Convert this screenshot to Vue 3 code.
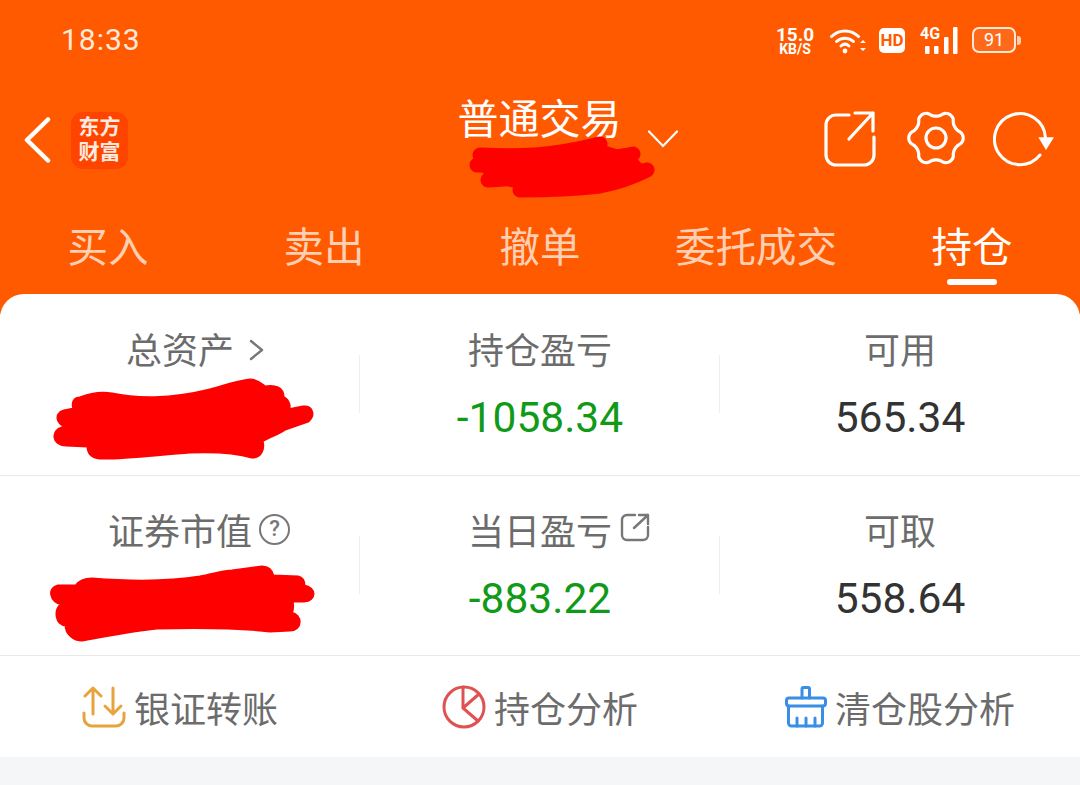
<template>
  <div class="page">
    <header class="head">
      <!-- 状态栏 -->
      <div class="status">
        <span class="time">18:33</span>
        <div class="status-right">
          <div class="speed"><b>15.0</b><b class="speed-unit">KB/S</b></div>
          <svg class="wifi" width="36" height="26" viewBox="0 0 36 26" fill="none" stroke="#fff" stroke-width="3" stroke-linecap="round">
            <path d="M1.5 8.5C9 1 21 1 28.5 8.5" />
            <path d="M6.5 13.5C11 9 19 9 23.5 13.5" />
            <path d="M11 18c2.500-2.300 5.500-2.300 8 0" />
            <circle cx="15" cy="23" r="2.400" fill="#fff" stroke="none" />
            <path d="M30 15l3-3 3 3zM30 20l3 3 3-3z" fill="#fff" stroke="none" />
          </svg>
          <span class="hd">HD</span>
          <div class="net">
            <span class="net-4g">4G</span>
            <svg width="38" height="27" viewBox="0 0 38 27" fill="#fff">
              <rect x="5" y="19" width="4.500" height="8" rx="1" />
              <rect x="14" y="19" width="4.500" height="8" rx="1" />
              <rect x="24" y="10" width="4.500" height="17" rx="1" />
              <rect x="33" y="0" width="4.500" height="27" rx="1" />
            </svg>
          </div>
          <div class="battery"><span class="battery-body">91</span><i class="battery-nub"></i></div>
        </div>
      </div>

      <!-- 导航 -->
      <nav class="nav">
        <svg width="27" height="46" viewBox="0 0 27 46" fill="none" stroke="#fff" stroke-width="4.500" stroke-linecap="round" stroke-linejoin="round">
          <path d="M24 2.500L3 23l21 20.500" />
        </svg>
        <div class="logo">东方<br />财富</div>
        <div class="title">普通交易</div>
        <svg class="chevron" width="30" height="18" viewBox="0 0 30 18" fill="none" stroke="#fff" stroke-width="2.200" stroke-linecap="round">
          <path d="M1 1.500L15 16 29 1.500" />
        </svg>
        <svg class="nav-share" width="52" height="56" viewBox="0 0 52 56" fill="none" stroke="#fff" stroke-width="3.200" stroke-linecap="round" stroke-linejoin="round">
          <path d="M25 4H12A10 10 0 0 0 2 14v30a10 10 0 0 0 10 10h28a10 10 0 0 0 10-10V26" />
          <path d="M25 28L49 2M31 2h18v18" />
        </svg>
        <svg class="nav-gear" width="58" height="56" viewBox="0 0 58 56" fill="none" stroke="#fff" stroke-width="3.200" stroke-linejoin="round">
          <path :d="gearPath" />
          <circle cx="29" cy="28" r="10" />
        </svg>
        <svg class="nav-refresh" width="62" height="56" viewBox="0 0 62 56" fill="none" stroke="#fff" stroke-width="3" stroke-linecap="round">
          <path d="M47 43A25.500 25.500 0 1 1 52.500 26" />
          <path d="M45.300 25.300H61L53 38z" fill="#fff" stroke="none" />
        </svg>
      </nav>
      <svg class="scribble-sub" width="200" height="70" viewBox="465 132 200 70">
        <path d="M480 155C500 156 520 156 535 155C560 153 580 149 600 144M477 165C510 166 530 165 560 163C590 160 610 159 633 154M488 180C515 178 535 178 560 175C590 173 620 175 647 170M520 190C550 190 575 189 600 186C620 182 635 176 647 170" fill="none" stroke="#f00" stroke-width="15" stroke-linecap="round" />
        <path d="M480 155L600 144 633 154 647 170 520 190 488 180 477 165z" fill="#f00" />
      </svg>

      <!-- 标签 -->
      <div class="tabs">
        <div v-for="tab in tabs" :key="tab" class="tab" :class="{ 'tab--active': tab === '持仓' }">{{ tab }}</div>
      </div>
    </header>

    <main class="card">
      <section class="row row--first">
        <div class="cell">
          <div class="label">总资产
            <svg class="label-icon label-arrow" width="15" height="22" viewBox="0 0 15 22" fill="none" stroke="#777" stroke-width="2.400" stroke-linecap="round" stroke-linejoin="round">
              <path d="M2 2l11 9-11 9" />
            </svg>
          </div>
          <div class="value">&nbsp;</div>
          <svg class="scribble" width="360" height="181" viewBox="0 294 360 181">
            <path fill="#f00" stroke="#f00" stroke-linejoin="round" stroke-width="3" d="M80 398C90 394 100 392 112 394C135 399 170 400 210 390C225 386 238 381 250 380C258 380 262 385 265 387C275 385 283 388 283 397C290 401 290 408 288 410L303 407C312 406 315 415 308 421L285 429C278 434 270 436 262 441C264 447 262 457 252 457C235 452 215 451 190 452C160 454 120 459 100 458C90 457 88 452 88 446L66 445C52 445 52 430 62 428L74 427C56 428 54 413 64 411L74 409C72 403 74 398 80 398z" />
          </svg>
        </div>
        <div class="cell">
          <div class="label">持仓盈亏</div>
          <div class="value value--down">-1058.34</div>
        </div>
        <div class="cell">
          <div class="label">可用</div>
          <div class="value">565.34</div>
        </div>
      </section>

      <section class="row">
        <div class="cell">
          <div class="label">证券市值
            <span class="label-icon help">?</span>
          </div>
          <div class="value">&nbsp;</div>
          <svg class="scribble scribble--low" width="360" height="179" viewBox="0 476 360 179">
            <path fill="#f00" stroke="#f00" stroke-linejoin="round" stroke-width="3" d="M58 586L76 586C80 580 86 579 92 579C130 582 170 582 200 577C215 574 225 571 232 571L262 567C270 567 272 572 273 576L298 577C303 578 304 583 304 586C316 588 316 600 304 601L292 601C293 606 293 610 291 613C302 615 302 630 290 630L270 631C245 628 200 627 157 628C135 630 105 636 82 640C74 640 66 634 66 625C56 625 54 610 62 604C50 601 48 588 58 586z" />
          </svg>
        </div>
        <div class="cell">
          <div class="label">当日盈亏
            <svg class="label-icon label-share" width="30" height="29" viewBox="0 0 30 29" fill="none" stroke="#777" stroke-width="2.400" stroke-linecap="round" stroke-linejoin="round">
              <path d="M15 2H7a5 5 0 0 0-5 5v15a5 5 0 0 0 5 5h16a5 5 0 0 0 5-5v-8" />
              <path d="M14 15L28 2M19 2h9v9" />
            </svg>
          </div>
          <div class="value value--down">-883.22</div>
        </div>
        <div class="cell">
          <div class="label">可取</div>
          <div class="value">558.64</div>
        </div>
      </section>

      <section class="actions">
        <div class="action">
          <svg width="44" height="42" viewBox="0 0 44 42" fill="none" stroke="#e8a33d" stroke-width="3" stroke-linecap="round" stroke-linejoin="round">
            <path d="M11 28V2M3 10l8-8 8 8" />
            <path d="M31 2v26M23 20l8 8 8-8" />
            <path d="M2 27v5a8 8 0 0 0 8 8h24a8 8 0 0 0 8-8v-5" />
          </svg>
          <span>银证转账</span>
        </div>
        <div class="action">
          <svg width="44" height="44" viewBox="0 0 44 44" fill="none" stroke="#e05252" stroke-width="3" stroke-linecap="round" stroke-linejoin="round">
            <circle cx="22" cy="22" r="20" />
            <path d="M21 2v21l15 13M21 23L37 9" />
          </svg>
          <span>持仓分析</span>
        </div>
        <div class="action">
          <svg width="42" height="42" viewBox="0 0 42 42" fill="none" stroke="#3a8ee6" stroke-width="3" stroke-linecap="round" stroke-linejoin="round">
            <path d="M17 12V3a1.500 1.500 0 0 1 1.500-1.500h4.500A1.500 1.500 0 0 1 24.500 3v9" />
            <rect x="1.500" y="12" width="39" height="8" rx="2.500" />
            <path d="M3.500 20v17a3 3 0 0 0 3 3h28a3 3 0 0 0 3-3V20" />
            <path d="M12 40v-8M21 40v-8M30 40v-8" />
          </svg>
          <span>清仓股分析</span>
        </div>
      </section>
    </main>
  </div>
</template>

<script setup>
const tabs = ['买入', '卖出', '撤单', '委托成交', '持仓']

// 齿轮外形：六个圆齿，左右两端各一个
const gearPath = (() => {
  const pts = []
  for (let i = 0; i < 120; i++) {
    const a = (i / 120) * Math.PI * 2
    const wave = Math.cos(6 * a)
    const r = 24.5 + 2.7 * Math.sign(wave) * Math.pow(Math.abs(wave), 0.7)
    pts.push(`${(29 + r * Math.cos(a)).toFixed(1)} ${(28 + r * Math.sin(a)).toFixed(1)}`)
  }
  return 'M' + pts.join('L') + 'z'
})()
</script>

<style>
html, body { background: #f5f6f8; }
</style>

<style scoped>
.page {
  position: relative;
  width: 1080px;
  height: 785px;
  overflow: hidden;
  background: #f5f6f8;
  font-family: Roboto, "Noto Sans CJK SC", sans-serif;
}

.head {
  position: relative;
  height: 314px;
  background: #ff5a00;
  color: #fff;
}

/* 状态栏 */
.status {
  height: 80px;
  display: flex;
  justify-content: space-between;
  padding: 0 59px 0 61px;
}
.time {
  font-size: 30px;
  line-height: 80px;
  letter-spacing: 1px;
  color: #ffe9dc;
}
.status-right {
  display: flex;
  align-items: flex-start;
  padding-top: 27px;
}
.speed {
  width: 38px;
  display: flex;
  flex-direction: column;
  align-items: center;
  font-size: 19px;
  line-height: 16px;
}
.speed-unit { font-size: 14px; line-height: 13px; }
.wifi { margin-left: 16px; margin-top: 1px; }
.hd {
  margin-left: 13px;
  margin-top: 1px;
  width: 26px;
  height: 25px;
  border-radius: 5px;
  background: #fff;
  color: #ff5a00;
  font-size: 17px;
  font-weight: 700;
  line-height: 25px;
  text-align: center;
}
.net { position: relative; margin-left: 15px; }
.net-4g {
  position: absolute;
  left: 0;
  top: -2px;
  font-size: 16px;
  font-weight: 700;
  line-height: 18px;
}
.battery { display: flex; align-items: center; margin-left: 14px; }
.battery-body {
  width: 44px;
  height: 26px;
  box-sizing: border-box;
  border: 2.500px solid #ffe9dc;
  border-radius: 7px;
  background: rgba(255, 255, 255, 0.1);
  font-size: 18px;
  line-height: 21px;
  text-align: center;
}
.battery-nub {
  width: 4px;
  height: 9px;
  margin-left: 1px;
  border-radius: 0 3px 3px 0;
  background: #ffd0b0;
}

/* 导航 */
.nav {
  height: 120px;
  display: flex;
  align-items: center;
  padding-left: 24px;
}
.logo {
  margin-left: 20px;
  width: 57px;
  height: 57px;
  border-radius: 12px;
  background: #ff4400;
  color: #ffeadf;
  font-size: 21px;
  font-weight: 700;
  line-height: 25px;
  padding-top: 3px;
  box-sizing: border-box;
  text-align: center;
}
.title {
  align-self: flex-start;
  margin: 16px 0 0 329.500px;
  font-size: 41px;
  line-height: 48px;
  white-space: nowrap;
}
.chevron { margin: -2px 0 0 26.500px; }
.nav-share { margin: -2px 0 0 146px; }
.nav-gear { margin: -3.500px 0 0 31px; }
.nav-refresh { margin: 0 0 0 28px; }
.scribble-sub { position: absolute; left: 465px; top: 132px; }

/* 标签 */
.tabs { display: flex; }
.tab {
  position: relative;
  width: 216px;
  height: 94px;
  font-size: 40.500px;
  line-height: 97px;
  text-align: center;
  color: #ffcfb3;
}
.tab--active { color: #fff; }
.tab--active::after {
  content: "";
  position: absolute;
  left: 83px;
  bottom: 9px;
  width: 50px;
  height: 6px;
  border-radius: 3px;
  background: #fff;
}

/* 资产卡片 */
.card {
  position: absolute;
  left: 0;
  right: 0;
  top: 294px;
  background: #fff;
  border-radius: 24px 24px 0 0;
}
.row {
  display: flex;
  align-items: center;
  height: 180px;
  box-sizing: border-box;
  border-bottom: 1px solid #eaeaea;
}
.row--first { height: 182px; }
.cell {
  position: relative;
  flex: 1;
  display: flex;
  flex-direction: column;
  align-items: center;
  gap: 17px;
}
.cell + .cell::before {
  content: "";
  position: absolute;
  left: -1px;
  top: 28px;
  height: 58px;
  width: 1px;
  background: #eeeeee;
}
.label {
  position: relative;
  font-size: 36px;
  line-height: 50px;
  color: #6c6c6c;
  white-space: nowrap;
}
.label-icon { position: absolute; }
.label-arrow { left: calc(100% + 15px); top: 12px; }
.label-share { left: calc(100% + 8px); top: 5px; }
.help {
  left: calc(100% + 7px);
  top: 6px;
  width: 31px;
  height: 31px;
  box-sizing: border-box;
  border: 2.500px solid #777;
  border-radius: 50%;
  color: #777;
  font-size: 22px;
  font-weight: 500;
  line-height: 26px;
  text-align: center;
}
.value {
  font-size: 42.500px;
  line-height: 48px;
  color: #333;
}
.value--down { color: #109a18; }
.scribble { position: absolute; left: 0; top: -33px; }
.scribble--low { top: -32px; }

/* 底部操作 */
.actions {
  height: 101px;
  display: flex;
  align-items: center;
}
.action {
  flex: 1;
  display: flex;
  align-items: center;
  justify-content: center;
  gap: 8px;
  font-size: 36px;
  color: #6c6c6c;
}
</style>
